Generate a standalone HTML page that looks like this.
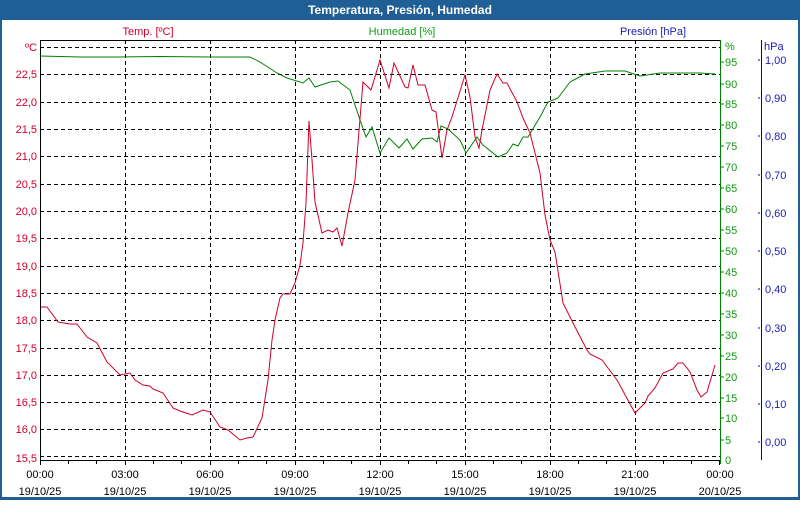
<!DOCTYPE html>
<html><head><meta charset="utf-8"><style>
body{margin:0;width:800px;height:500px;overflow:hidden;background:#fff;font-family:"Liberation Sans",sans-serif}
</style></head><body>
<svg width="800" height="500" xmlns="http://www.w3.org/2000/svg" font-family="Liberation Sans, sans-serif" font-size="11">
<rect x="0" y="0" width="800" height="500" fill="#1f5f96"/>
<rect x="2" y="20" width="796" height="477" fill="#fff"/>
<text x="400" y="14" fill="#fff" font-weight="bold" font-size="12" text-anchor="middle">Temperatura, Presión, Humedad</text>
<text x="148" y="35" fill="#d0002a" text-anchor="middle">Temp. [ºC]</text>
<text x="402" y="35" fill="#139b13" text-anchor="middle">Humedad [%]</text>
<text x="653" y="35" fill="#1c1cb0" text-anchor="middle">Presión [hPa]</text>
<g stroke="#000" stroke-dasharray="4,3" stroke-width="1">
<line x1="40" x2="720" y1="47.5" y2="47.5"/><line x1="40" x2="720" y1="74.5" y2="74.5"/><line x1="40" x2="720" y1="102.5" y2="102.5"/><line x1="40" x2="720" y1="129.5" y2="129.5"/><line x1="40" x2="720" y1="156.5" y2="156.5"/><line x1="40" x2="720" y1="184.5" y2="184.5"/><line x1="40" x2="720" y1="211.5" y2="211.5"/><line x1="40" x2="720" y1="238.5" y2="238.5"/><line x1="40" x2="720" y1="266.5" y2="266.5"/><line x1="40" x2="720" y1="293.5" y2="293.5"/><line x1="40" x2="720" y1="320.5" y2="320.5"/><line x1="40" x2="720" y1="348.5" y2="348.5"/><line x1="40" x2="720" y1="375.5" y2="375.5"/><line x1="40" x2="720" y1="402.5" y2="402.5"/><line x1="40" x2="720" y1="429.5" y2="429.5"/><line x1="40" x2="720" y1="456.5" y2="456.5"/>
<line y1="40" y2="460" x1="125.5" x2="125.5"/><line y1="40" y2="460" x1="210.5" x2="210.5"/><line y1="40" y2="460" x1="295.5" x2="295.5"/><line y1="40" y2="460" x1="380.5" x2="380.5"/><line y1="40" y2="460" x1="465.5" x2="465.5"/><line y1="40" y2="460" x1="550.5" x2="550.5"/><line y1="40" y2="460" x1="635.5" x2="635.5"/>
</g>
<line x1="40" x2="720" y1="40.5" y2="40.5" stroke="#000"/>
<line x1="40.5" x2="40.5" y1="40" y2="461" stroke="#000"/>
<line x1="40" x2="720" y1="460.5" y2="460.5" stroke="#000"/>
<line x1="720.5" x2="720.5" y1="40" y2="464" stroke="#008000"/>
<line x1="761.5" x2="761.5" y1="40" y2="460" stroke="#0000c0"/>
<g stroke="#000">
<path d="M40.5 461v4M68.5 461v3M96.5 461v3M125.5 461v4M153.5 461v3M181.5 461v3M210.5 461v4M238.5 461v3M266.5 461v3M295.5 461v4M323.5 461v3M351.5 461v3M380.5 461v4M408.5 461v3M436.5 461v3M465.5 461v4M493.5 461v3M521.5 461v3M550.5 461v4M578.5 461v3M606.5 461v3M635.5 461v4M663.5 461v3M691.5 461v3M719.5 461v4"/>
</g>
<g fill="#d0002a" text-anchor="end">
<text x="37" y="51">ºC</text><text x="37" y="78">22,5</text><text x="37" y="106">22,0</text><text x="37" y="133">21,5</text><text x="37" y="160">21,0</text><text x="37" y="188">20,5</text><text x="37" y="215">20,0</text><text x="37" y="242">19,5</text><text x="37" y="270">19,0</text><text x="37" y="297">18,5</text><text x="37" y="324">18,0</text><text x="37" y="352">17,5</text><text x="37" y="379">17,0</text><text x="37" y="406">16,5</text><text x="37" y="433">16,0</text><text x="37" y="462">15,5</text>
</g>
<g fill="#139b13">
<text x="725" y="50">%</text>
<text x="725" y="66">95</text><text x="725" y="88">90</text><text x="725" y="108">85</text><text x="725" y="129">80</text><text x="725" y="150">75</text><text x="725" y="171">70</text><text x="725" y="192">65</text><text x="725" y="213">60</text><text x="725" y="234">55</text><text x="725" y="255">50</text><text x="725" y="276">45</text><text x="725" y="297">40</text><text x="725" y="318">35</text><text x="725" y="339">30</text><text x="725" y="360">25</text><text x="725" y="381">20</text><text x="725" y="402">15</text><text x="725" y="422">10</text><text x="725" y="444">5</text><text x="725" y="464">0</text>
</g>
<g stroke="#008000"><path d="M721 62h3M721 84h3M721 104h3M721 125h3M721 146h3M721 167h3M721 188h3M721 209h3M721 230h3M721 251h3M721 272h3M721 293h3M721 314h3M721 335h3M721 356h3M721 377h3M721 398h3M721 418h3M721 440h3"/></g>
<g fill="#1c1cb0">
<text x="764" y="50">hPa</text>
<text x="765" y="64">1,00</text><text x="765" y="102">0,90</text><text x="765" y="140">0,80</text><text x="765" y="179">0,70</text><text x="765" y="217">0,60</text><text x="765" y="255">0,50</text><text x="765" y="293">0,40</text><text x="765" y="332">0,30</text><text x="765" y="370">0,20</text><text x="765" y="408">0,10</text><text x="765" y="446">0,00</text>
</g>
<g stroke="#0000c0"><path d="M760 60h-2M760 98h-2M760 136h-2M760 175h-2M760 213h-2M760 251h-2M760 289h-2M760 328h-2M760 366h-2M760 404h-2M760 442h-2"/></g>
<g fill="#000" text-anchor="middle">
<text x="40" y="478">00:00</text><text x="40" y="495">19/10/25</text>
<text x="125" y="478">03:00</text><text x="125" y="495">19/10/25</text>
<text x="210" y="478">06:00</text><text x="210" y="495">19/10/25</text>
<text x="295" y="478">09:00</text><text x="295" y="495">19/10/25</text>
<text x="380" y="478">12:00</text><text x="380" y="495">19/10/25</text>
<text x="465" y="478">15:00</text><text x="465" y="495">19/10/25</text>
<text x="550" y="478">18:00</text><text x="550" y="495">19/10/25</text>
<text x="635" y="478">21:00</text><text x="635" y="495">19/10/25</text>
<text x="720" y="478">00:00</text><text x="720" y="495">20/10/25</text>
</g>
<polyline fill="none" stroke="#008000" stroke-width="1" points="40,56 80,57 120,57 160,56.5 210,57 250,57 260,62 277,73 287,78 303,83 309,78 315,87 330,82 338,81 350,90 360,120 366,137 372,127 380,153 389,138 399,148 407,139 413,149 422,139 432,138 437,142 441,126 448,129 460,140 466,153 477,137 483,145 498,157 507,153 513,144 518,146 523,137 528,137 540,117 548,102 558,98 570,82 585,74 605,71 625,71 640,76 660,73 700,73 715,74"/>
<polyline fill="none" stroke="#d0002a" stroke-width="1" points="41,307 47,307 58,322 70,324 77,324 87,337 97,343 107,362 120,375 130,373 135,380 143,385 150,386 153,389 163,393 173,408 180,411 192,415 203,410 210,412 220,427 228,430 240,440 247,438 253,437 262,418 268,380 272,340 275,320 280,298 283,294 290,294 295,283 300,265 303,243 306,203 309,121 312,160 315,202 322,233 328,230 333,232 337,228 342,246 348,213 355,180 363,82 371,90 380,60 389,88 394,63 405,87 408,88 413,65 418,85 425,85 432,110 436,112 442,158 447,130 452,117 465,75 470,97 475,137 479,148 482,130 490,90 497,74 503,83 507,83 517,102 523,118 530,133 540,173 545,215 550,240 555,252 563,303 573,323 587,350 590,354 602,360 617,380 635,413 645,403 648,396 655,388 663,373 673,369 678,363 683,363 690,372 697,390 701,397 707,392 715,365"/>
</svg>
</body></html>
